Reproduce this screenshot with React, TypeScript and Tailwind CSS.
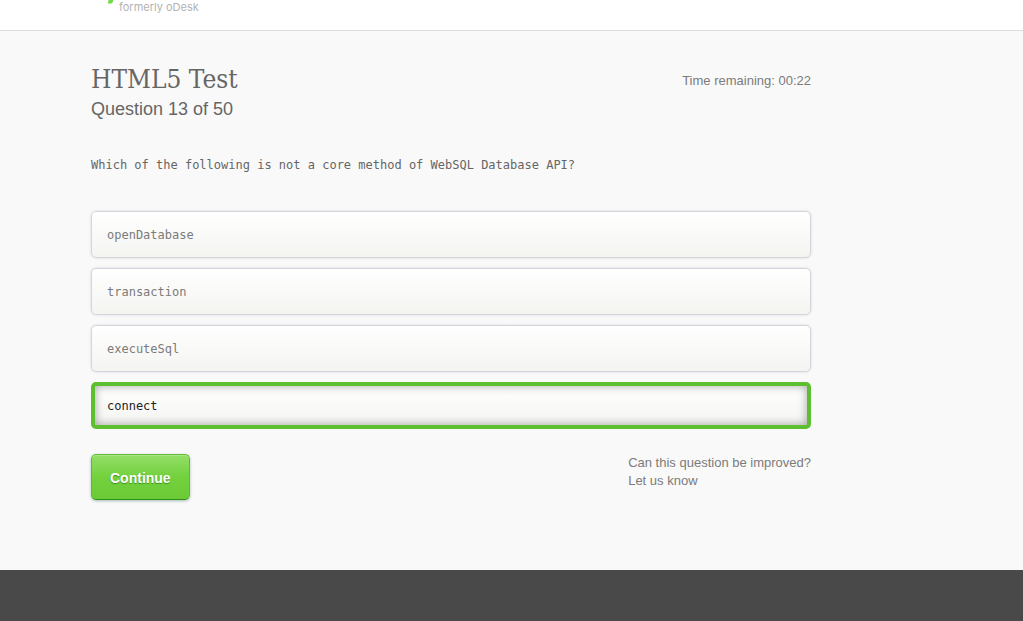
import { useState } from 'react';

const OPTIONS = ['openDatabase', 'transaction', 'executeSql', 'connect'];

function Header() {
  return (
    <header className="h-[31px] border-b border-[#dcdcdc] bg-white pl-[107px]">
      <div className="flex items-start gap-[5px]">
        <svg className="h-[4px] w-[7px]" viewBox="0 0 7 4" aria-hidden="true">
          <path d="M1.6 0H6.4L5.5 2.4Q5 3.4 3.9 3.4H0.8Z" fill="#6fda44" />
        </svg>
        <span className="font-['Inter','Liberation_Sans',sans-serif] text-[11px] leading-[14px] text-[#b3b3b3]">
          formerly oDesk
        </span>
      </div>
    </header>
  );
}

function Option({
  label,
  checked,
  onSelect,
}: {
  label: string;
  checked: boolean;
  onSelect: () => void;
}) {
  const state = checked
    ? 'border-4 border-[#5bbf2f] px-3 text-[#222222] shadow-[inset_0_0_10px_rgba(0,0,0,0.35)]'
    : 'border border-[#d3d5dd] px-[15px] text-[#7b7b7b] shadow-[0_0_3px_rgba(0,0,0,0.12)]';
  return (
    <label
      className={`flex h-[47px] cursor-pointer items-center rounded-[5px] bg-linear-to-b from-white to-[#f4f4f1] pt-px font-['DejaVu_Sans_Mono','Liberation_Mono',monospace] text-[12px] leading-4 ${state}`}
    >
      <input
        type="radio"
        name="answer"
        value={label}
        checked={checked}
        onChange={onSelect}
        className="sr-only"
      />
      {label}
    </label>
  );
}

export default function App() {
  const [answer, setAnswer] = useState('connect');

  return (
    <div className="flex min-h-screen flex-col bg-[#f9f9f9] font-['Liberation_Sans',Arial,sans-serif] text-[#666666]">
      <Header />
      <main className="ml-[91px] w-full max-w-[720px] grow pt-8 pb-[70px]">
        <div className="flex items-start justify-between">
          <div>
            <h1 className="font-['DejaVu_Serif_Condensed','DejaVu_Serif',serif] text-[26px] leading-8">
              HTML5 Test
            </h1>
            <p className="text-[18px] leading-7">Question 13 of 50</p>
          </div>
          <p className="pt-[9px] text-[13px] leading-[18px] text-[#7b7b7b]">Time remaining: 00:22</p>
        </div>
        <form onSubmit={(event) => event.preventDefault()}>
          <fieldset>
            <legend className="pt-[34px] font-['DejaVu_Sans_Mono','Liberation_Mono',monospace] text-[12px] leading-4">
              Which of the following is not a core method of WebSQL Database API?
            </legend>
            <div className="flex flex-col gap-[10px] pt-[38px]">
              {OPTIONS.map((option) => (
                <Option
                  key={option}
                  label={option}
                  checked={answer === option}
                  onSelect={() => setAnswer(option)}
                />
              ))}
            </div>
          </fieldset>
          <div className="flex items-start justify-between pt-[25px]">
            <button
              type="submit"
              className="h-[46px] cursor-pointer rounded-[5px] border border-[#5fbb35] border-b-[#2f8f1c] bg-linear-to-b from-[#93de66] via-[#72d13c] to-[#6cca36] px-[18px] pt-[2px] text-[14px] leading-5 font-bold text-white shadow-[0_1px_3px_rgba(0,80,40,0.35),inset_0_1px_0_rgba(255,255,255,0.25)] [text-shadow:0_1px_1px_#3c8f1c]"
            >
              Continue
            </button>
            <a href="#feedback" className="text-[13px] leading-[18px] text-[#7b7b7b]">
              Can this question be improved?
              <br />
              Let us know
            </a>
          </div>
        </form>
      </main>
      <footer className="h-[51px] bg-[#494949]" />
    </div>
  );
}
